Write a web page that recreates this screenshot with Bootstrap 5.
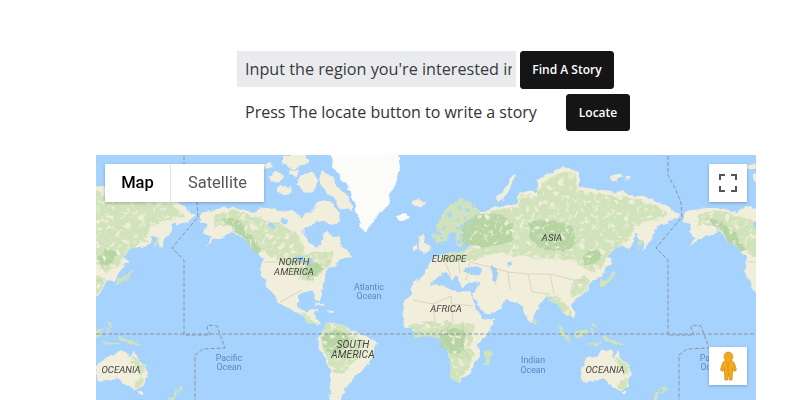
<!DOCTYPE html>
<html lang="en">
<head>
<meta charset="utf-8">
<title>Find A Story</title>
<link rel="stylesheet" href="https://cdn.jsdelivr.net/npm/bootstrap@5.3.0/dist/css/bootstrap.min.css">
<style>
html,body{height:400px;overflow:hidden;background:#fff}
body{font-family:"Open Sans","Liberation Sans",sans-serif;color:#212529}
.story-top{padding-top:51px}
.story-line-a{padding-left:237px;gap:4px;height:38px;margin-bottom:5px}
.story-line-b{padding-left:245px;height:37px;margin-bottom:24px}
.story-input.form-control{width:279px;height:36px;flex:none;border:0;border-radius:0;background:#e9ebee;padding:0 4px 0 8px;font-size:16.2px;color:#333}
.story-input::placeholder{color:#3a3a3a;opacity:1}
.story-btn.btn{background:#151515;border-color:#151515;color:#fff;font-size:12px;font-weight:600;border-radius:3px;padding:0;height:100%}
.btn-find{width:94px}
.btn-locate{width:64px;margin-left:28px}
.story-prompt{font-size:16px;width:293px;white-space:nowrap;color:#333;padding-bottom:2px}
.map-box{position:relative;width:660px;height:245px;margin-left:96px;overflow:hidden;background:#a5d3fd}
.map-box>svg{display:block}
.map-ctl{position:absolute;background:#fff;box-shadow:0 1px 3px rgba(0,0,0,.25);font-family:Roboto,"Liberation Sans",sans-serif}
.map-type{left:9px;top:9px;width:159px;height:38px;font-size:16.5px}
.map-type span{height:100%}
.type-map{width:66px;font-weight:500;color:#000;border-right:1px solid #e6e6e6}
.type-sat{flex:1;color:#565656}
.map-full{left:613px;top:9px;width:38px;height:38px}
.map-peg{left:613px;top:192px;width:38px;height:38px}
.ml{font-family:Roboto,"Liberation Sans",sans-serif;font-style:italic;font-size:9.6px;fill:#444;text-anchor:middle}
.ml-big{font-size:10.2px;letter-spacing:.2px}
.oc{font-family:Roboto,"Liberation Sans",sans-serif;font-size:8.8px;fill:#5b87c4;text-anchor:middle}
.land{fill:#f1eedb}
.veg{fill:#d0e3ba;filter:url(#mottle)}
.forest{fill:#b7d4a3;filter:url(#mottle)}
.sea{fill:#a5d3fd}
.ice{fill:#fbfbfa}
.bord{fill:none;stroke:#c4bca3;stroke-width:.5}
.dash{fill:none;stroke:#8b8a9a;stroke-width:.9;stroke-dasharray:4 2}
</style>
</head>
<body>
<div class="story-top">
  <div class="d-flex align-items-start story-line-a">
    <input class="form-control story-input" type="text" placeholder="Input the region you're interested in">
    <button class="btn story-btn btn-find" type="button">Find A Story</button>
  </div>
  <div class="d-flex align-items-center story-line-b">
    <span class="story-prompt">Press The locate button to write a story</span>
    <button class="btn story-btn btn-locate" type="button">Locate</button>
  </div>
</div>
<div class="map-box">
  <svg width="660" height="245" viewBox="96 155 660 245">
    <defs>
      <filter id="soft" filterUnits="userSpaceOnUse" x="96" y="155" width="660" height="245"><feGaussianBlur stdDeviation="0.5"/></filter>
      <filter id="rough" filterUnits="userSpaceOnUse" x="90" y="150" width="672" height="256" color-interpolation-filters="sRGB">
        <feTurbulence type="fractalNoise" baseFrequency=".11" numOctaves="3" seed="4" result="n"/>
        <feDisplacementMap in="SourceGraphic" in2="n" scale="7" xChannelSelector="R" yChannelSelector="G"/>
      </filter>
      <filter id="mottle" x="-5%" y="-5%" width="110%" height="110%" color-interpolation-filters="sRGB">
        <feTurbulence type="fractalNoise" baseFrequency=".2" numOctaves="2" seed="9"/>
        <feColorMatrix values="0 0 0 0 0 0 0 0 0 0 0 0 0 0 0 6 0 0 0 -1.7" result="m"/>
        <feComposite in="SourceGraphic" in2="m" operator="in"/>
      </filter>
      <g id="world">
        <path class="ice" d="M330 150L397 150L400 167L395 183L387 207L373 220L367 232L360 225L353 200L343 180L333 167Z"/>
        <path class="ice" d="M396 216l10-2 4 3-6 5-7-2Z"/>
        <path class="land" d="M268 175l10-3 6 4-4 5-10 1Z M290 168l8 2-1 6-8-1Z M300 176l12-4 6 8-3 10-10 3-7-8Z M322 172l10 4 4 10 12 12 4 14-10-4-8-10-10-8-4-10Z M278 186l14 2-2 6-12-2Z M262 165l8-2 2 4-9 2Z M282 156l22-2 6 8-16 6-12-4Z"/>
        <path class="land" d="M200 213L210 210L223 208L236 208L253 212L263 207L278 210L290 211L296 214L303 220L312 208L323 200L333 205L340 213L337 223L325 222L313 224L303 230L308 240L317 247L323 240L327 230L337 238L347 250L350 257L340 262L330 266L325 272L323 284L320 292L319 302L316 300L314 292L304 291L298 297L298 307L307 313L312 308L318 309L313 315L320 322L316 325L309 321L297 313L280 303L267 287L260 270L263 257L247 243L233 231L224 236L214 241L206 246L212 238L204 232L208 224L200 222Z"/>
        <path class="veg" d="M212 214L236 210L252 216L276 222L295 232L303 244L306 254L318 252L332 250L332 262L320 274L312 282L296 278L284 262L268 256L246 238L232 226L214 226Z"/>
        <path class="forest" d="M222 218l14 2 16 14 10 16-6 2-12-12-10-10Z M304 266l14-4 4 8-10 10-8-4Z"/>
        <path class="sea" d="M268 222l5 1 3 6-5 0Z M280 218l8 2-1 4-8-2Z M304 262l8-3 3 3-8 3Z M296 256l6-1 1 6-4 1Z"/>
        <path class="veg" d="M300 312l6 2 6 5 6 5-6-1-8-5Z"/>
        <path class="land" d="M316 303l10 2-1 2-9-2Z M327 309l6 1-1 2-5-1Z"/>
        <path class="land" d="M412 201l8-2 5 3-4 5-7 0Z"/>
        <path class="land" d="M320 333L327 322L343 325L357 332L370 339L377 343L373 357L360 373L347 383L343 395L340 410L328 410L330 390L332 373L323 357L318 342Z"/>
        <path class="veg" d="M320 333L327 322L343 325L352 332L365 345L358 358L345 372L334 374L327 360L322 346Z"/>
        <path class="forest" d="M322 336l14-6 12 4 2 10-10 6-8 6-8-8Z"/>
        <path class="land" d="M403 313L406 298L420 285L440 284L450 290L470 292L475 305L482 318L495 320L485 335L478 345L480 355L470 372L458 383L452 378L447 355L443 335L430 330L413 332L405 325Z"/>
        <path class="veg" d="M408 326l22-4 20 0 24 2-1 8-3 16 4 6-6 14-10 14-6-2-4-20-3-18-14-6-16 2Z"/>
        <path class="forest" d="M440 330l22-2 4 10-4 14-14 2-8-8Z"/>
        <path class="veg" d="M485 353l5-4 2 3-4 12-5 1Z"/>
        <path class="veg" d="M433 235L445 210L460 198L472 203L480 212L470 220L466 232L470 243L458 246L455 232L448 234L445 243L437 244Z"/>
        <path class="land" d="M418 238l6-2 3 8 4 8-9 2-3-6Z M412 245l4-1 1 5-5 1Z"/>
        <path class="land" d="M412 295L411 283L420 280L424 272L432 262L437 255L445 254L452 252L462 252L470 246L472 226L480 212L497 207L517 203L520 190L537 193L537 180L563 167L577 170L580 187L603 190L630 193L660 202L680 215L668 224L663 225L647 225L637 228L634 240L628 248L617 247L610 254L607 257L613 260L607 267L604 272L597 280L593 280L587 290L577 300L572 304L574 318L570 316L563 313L558 303L552 296L547 295L540 305L530 322L524 312L520 303L508 300L505 303L497 313L484 315L477 303L472 293L480 283L470 282L463 287L457 277L450 280L445 272L440 278L433 280L426 290Z"/>
        <path class="veg" d="M437 256L470 248L476 226L482 214L497 210L517 206L522 194L537 197L540 184L562 172L574 174L578 190L602 194L628 196L658 206L670 216L650 222L634 226L630 240L620 246L610 252L602 268L590 272L575 262L540 258L515 256L498 252L470 262L444 262Z"/>
        <path class="forest" d="M463 222L480 214L500 215L511 222L512 240L495 246L476 248L463 244Z"/>
        <path class="forest" d="M530 222l24-2 18 6 6 16-14 10-20-2-14-12Z"/>
        <path class="forest" d="M590 248l12 4-6 12-10 2-4-8Z"/>
        <path class="veg" d="M545 294l14 2 10 12 2 8-8-2-5-10-8-4Z"/>
        <path class="veg" d="M574 280l14-6 2 8-6 10-10 6-4-8Z"/>
        <path class="sea" d="M466 268l10-2 7 3-3 5-11 1-6-3Z"/>
        <path class="sea" d="M491 264l4 1 2 6 1 8-4 2-2-8Z"/>
        <path class="sea" d="M507 262l5 0 1 3-5 1Z"/>
        <path class="land" d="M497 197l8-10 10-12 3 1-7 12-8 11-5 2Z"/>
        <path class="land" d="M610 176l8-2 4 4-5 3-6-1Z M624 178l5 0-1 3-4-1Z"/>
        <path class="land" d="M636 228l10-6 14-2 4 2-8 2-2 8-6 12-4 6-2-10-4-4-4-2Z"/>
        <path class="veg" d="M637 244l4-6 2 1-1 6-3 6-2-1Z"/>
        <path class="veg" d="M600 279l8-1 7-8 2 2-4 8-8 4-5 1Z"/>
        <path class="veg" d="M557 326l5 2 8 12 3 3-5-1-8-9Z M575 332l6-3 6 1-3 6-7 2Z M586 342l16 1 1 1-14 1Z M590 328l3 2-1 6-3-3Z M603 337l10 1 8 5 7 3-10-1-8-4-7-1Z M593 322l3 1 0 6-3-2Z"/>
        <path class="veg" d="M532 318l2 0 2 5-2 1Z"/>
        <path class="land" d="M580 367L587 358L597 355L603 350L611 352L613 357L618 351L622 358L630 366L632 373L627 387L621 390L613 387L607 382L603 378L592 381L583 382Z"/>
        <path class="veg" d="M615 355l7 4 8 8-2 6-6 2-2-8-5-6Z M619 382l7-6 2 4-4 9-5-1Z"/>
        <path class="land" d="M622 391l4 0 0 3-3 0Z"/>
        <path class="veg" d="M657 393l5-6 3-2 2 3-4 5-5 3Z M654 396l6-3-3 7-6 3Z"/>
      </g>
      <g id="lines">
        <path class="bord" d="M413 300l20 4 2 18M433 304l18-8 2 26M453 304l20 2M451 322l-8 14M463 322l-1 24 8 14M447 352l16 6M436 322l-14 0"/>
        <path class="bord" d="M470 262l24 6 14 4 20 2 22 0 24 6 12 0M508 272l2 18M528 274l4 18 18 2M470 262l-4 18M550 274l4 20M494 268l2 18M445 262l6 14M458 256l2 18"/>
        <path class="bord" d="M264 262L332 262M280 302L302 290"/>
        <path class="dash" d="M184 150L184 175L192 190L197 203L198 217L172 248L184 260L184 335L210 335L207 328L208 325L217 326L225 348L203 349L195 355L195 410"/>
      </g>
    </defs>
    <rect x="96" y="155" width="660" height="245" class="sea"/>
    <g filter="url(#soft)">
      <g filter="url(#rough)">
        <use href="#world" x="-484"/>
        <use href="#world"/>
        <use href="#world" x="484"/>
      </g>
      <use href="#lines" x="-484"/>
      <use href="#lines"/>
      <use href="#lines" x="484"/>
      <path class="dash" d="M96 334H756"/>
    </g>
    <text class="ml" x="294" y="265">NORTH</text>
    <text class="ml" x="294" y="275">AMERICA</text>
    <text class="ml" x="449" y="262">EUROPE</text>
    <text class="ml" x="552" y="241">ASIA</text>
    <text class="ml" x="446" y="312">AFRICA</text>
    <text class="ml ml-big" x="353" y="347.500">SOUTH</text>
    <text class="ml ml-big" x="353" y="358">AMERICA</text>
    <text class="ml" x="121" y="373">OCEANIA</text>
    <text class="ml" x="605" y="373">OCEANIA</text>
    <text class="oc" x="369" y="290">Atlantic</text>
    <text class="oc" x="369" y="299">Ocean</text>
    <text class="oc" x="229" y="361">Pacific</text>
    <text class="oc" x="229" y="370">Ocean</text>
    <text class="oc" x="533" y="363">Indian</text>
    <text class="oc" x="533" y="372.500">Ocean</text>
    <text class="oc" x="713" y="361">Pacific</text>
    <text class="oc" x="713" y="370">Ocean</text>
  </svg>
  <div class="map-ctl map-type d-flex">
    <span class="type-map d-flex align-items-center justify-content-center">Map</span>
    <span class="type-sat d-flex align-items-center justify-content-center">Satellite</span>
  </div>
  <div class="map-ctl map-full d-flex align-items-center justify-content-center">
    <svg width="18" height="18" viewBox="0 0 18 18"><path d="M1 6V1H6M12 1H17V6M17 12V17H12M6 17H1V12" fill="none" stroke="#555" stroke-width="2"/></svg>
  </div>
  <div class="map-ctl map-peg d-flex align-items-center justify-content-center">
    <svg width="18" height="30" viewBox="0 0 18 30">
      <path d="M9 1a4.800 4.800 0 0 1 4.800 4.800c0 1.600-.8 3-2 3.600 2.200.4 3.200 1.600 3.800 3.400l1.800 6.200-2.400 1.400-1.400-3.400-.6 12h-2.600l-.9-7-.9 7H5.900l-.6-12-1.400 3.400-2.400-1.400 1.800-6.200c.6-1.800 1.600-3 3.800-3.400-1.200-.6-2-2-2-3.600A4.800 4.800 0 0 1 9 1Z" fill="#f6a81d" stroke="#c98a12" stroke-width=".7"/>
      <path d="M7 10.500l2 3 2-3M9 13.500V20" fill="none" stroke="#d98f14" stroke-width=".8"/>
    </svg>
  </div>
</div>
<script src="https://cdn.jsdelivr.net/npm/bootstrap@5.3.0/dist/js/bootstrap.bundle.min.js"></script>
</body>
</html>
